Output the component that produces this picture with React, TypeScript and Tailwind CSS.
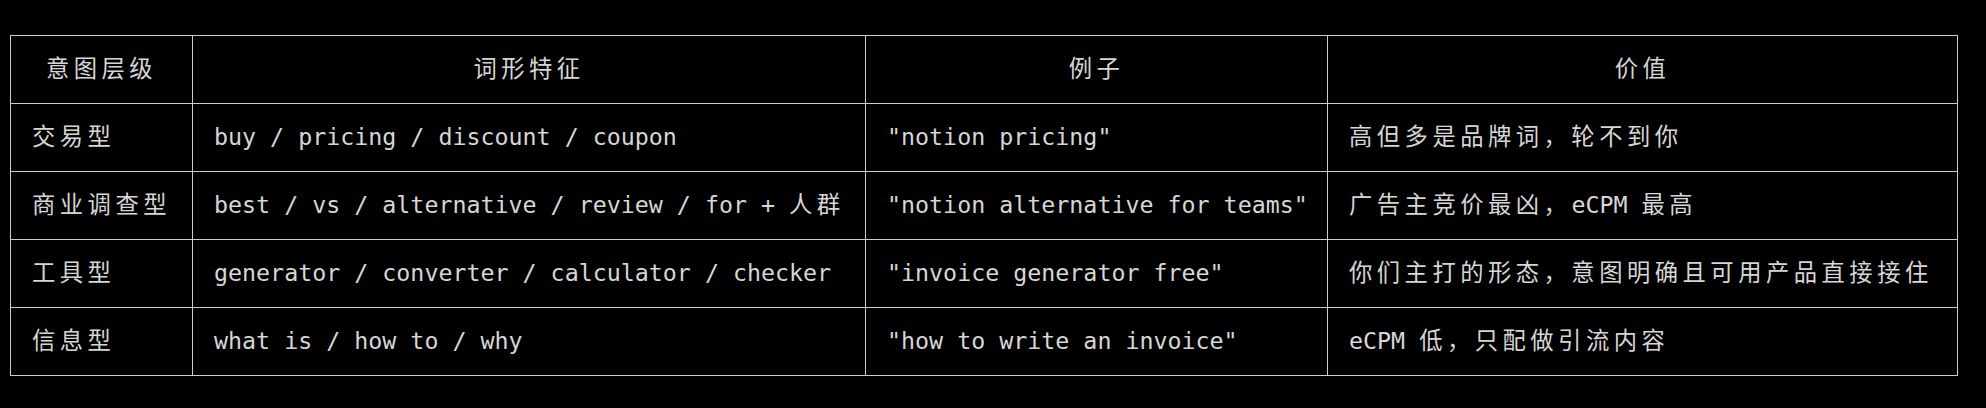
import React from "react";

const CJK = /([\u3000-\u303f\u3400-\u9fff\uff00-\uffef]+)/;

function T({ text }: { text: string }) {
  const parts = text.split(CJK);
  return (
    <>
      {parts.map((p, i) =>
        CJK.test(p) ? (
          <span key={i} className="tracking-[4.5px]">
            {p}
          </span>
        ) : (
          <span key={i}>{p}</span>
        )
      )}
    </>
  );
}

const headers = ["意图层级", "词形特征", "例子", "价值"];
const rows = [
  ["交易型", "buy / pricing / discount / coupon", '"notion pricing"', "高但多是品牌词，轮不到你"],
  ["商业调查型", "best / vs / alternative / review / for + 人群", '"notion alternative for teams"', "广告主竞价最凶，eCPM 最高"],
  ["工具型", "generator / converter / calculator / checker", '"invoice generator free"', "你们主打的形态，意图明确且可用产品直接接住"],
  ["信息型", "what is / how to / why", '"how to write an invoice"', "eCPM 低，只配做引流内容"],
];

export default function App() {
  return (
    <div
      className="min-h-[408px] w-full bg-black pt-[35px] pl-[10px] text-[#d6d6d6] text-[23.3px]"
      style={{ fontFamily: '"DejaVu Sans Mono", "Noto Sans CJK SC", monospace' }}
    >
      <table className="table-fixed border-collapse w-[1947px]">
        <colgroup>
          <col className="w-[182px]" />
          <col className="w-[673px]" />
          <col className="w-[462px]" />
          <col className="w-[630px]" />
        </colgroup>
        <thead>
          <tr className="h-[68px]">
            {headers.map((h, i) => (
              <th
                key={i}
                className="border border-[#cccccc] font-normal text-center whitespace-nowrap px-[21px] align-middle"
              >
                <T text={h} />
              </th>
            ))}
          </tr>
        </thead>
        <tbody>
          {rows.map((r, ri) => (
            <tr key={ri} className="h-[68px]">
              {r.map((c, ci) => (
                <td
                  key={ci}
                  className="border border-[#cccccc] text-left whitespace-nowrap pl-[21px] pr-0 align-middle"
                >
                  <T text={c} />
                </td>
              ))}
            </tr>
          ))}
        </tbody>
      </table>
    </div>
  );
}
